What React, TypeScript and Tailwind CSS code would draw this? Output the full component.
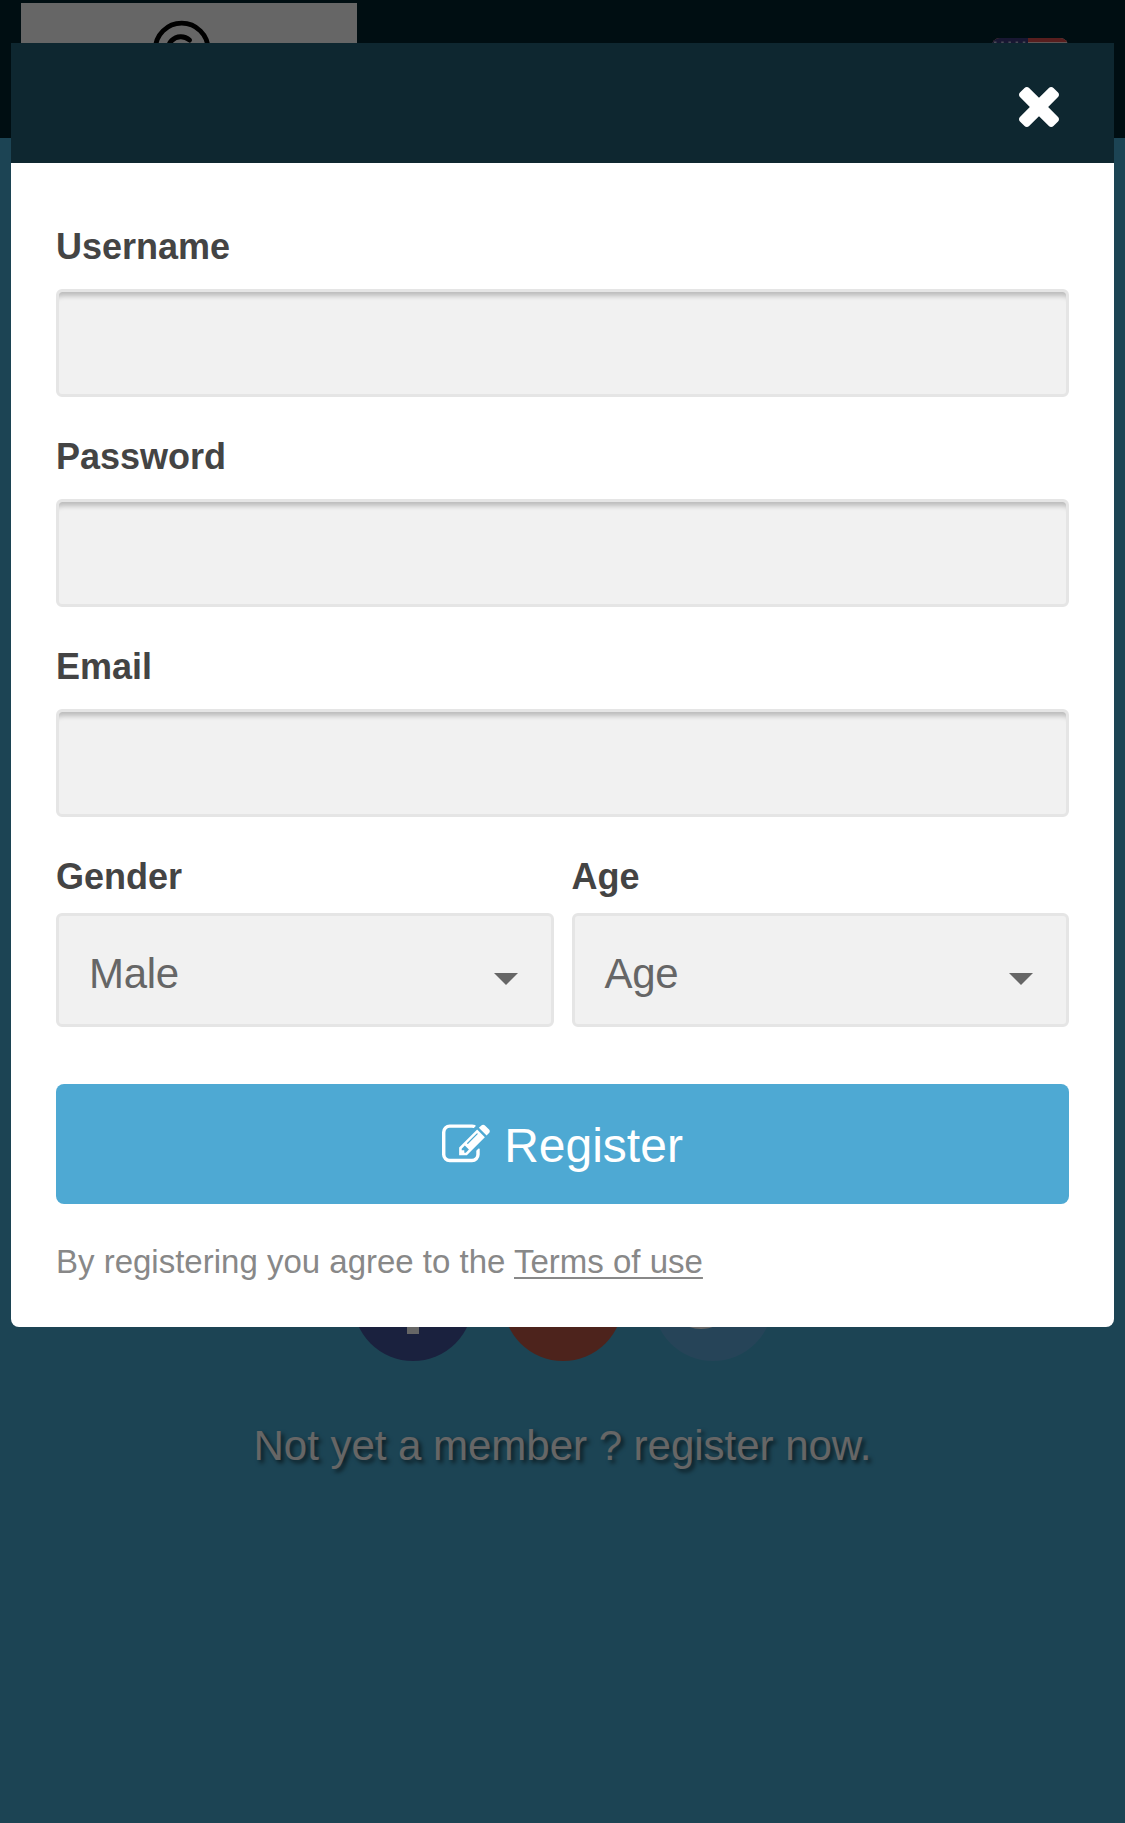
import React, { useState } from 'react';

interface TextFieldProps {
  label: string;
  type: string;
  value: string;
  onChange: (value: string) => void;
}

const TextField: React.FC<TextFieldProps> = ({ label, type, value, onChange }) => (
  <label className="block h-[210px]">
    <span className="block h-[70px] pt-1.5 text-[36px] font-bold leading-[44px] text-[#444]">{label}</span>
    <input
      type={type}
      value={value}
      onChange={(e) => onChange(e.target.value)}
      className="block h-[108px] w-full rounded-md border-[3px] border-[#e5e5e5] bg-[#f1f1f1] px-8 text-[42px] text-[#666] shadow-[inset_0_9px_5px_-5px_rgba(0,0,0,0.22)] outline-none"
    />
  </label>
);

interface SelectFieldProps {
  label: string;
  value: string;
}

const SelectField: React.FC<SelectFieldProps> = ({ label, value }) => (
  <div className="flex-1">
    <span className="block h-[64px] pt-1.5 text-[36px] font-bold leading-[44px] text-[#444]">{label}</span>
    <button
      type="button"
      className="flex h-[114px] w-full items-center justify-between rounded-md border-[3px] border-[#e5e5e5] bg-[#f1f1f1] pl-[30px] pr-[33px] text-[42px] text-[#666]"
    >
      <span className="pt-1.5 tracking-[-0.3px]">{value}</span>
      <svg className="mt-[17px] h-3 w-6" viewBox="0 0 24 12" fill="currentColor">
        <path d="M0 0h24L12 12z" />
      </svg>
    </button>
  </div>
);

const CloseIcon = () => (
  <svg className="h-10 w-10" viewBox="302 366 1188 1188" fill="currentColor">
    <path d="M1490 1322q0 40-28 68l-136 136q-28 28-68 28t-68-28l-294-294-294 294q-28 28-68 28t-68-28l-136-136q-28-28-28-68t28-68l294-294-294-294q-28-28-28-68t28-68l136-136q28-28 68-28t68 28l294 294 294-294q28-28 68-28t68 28l136 136q28 28 28 68t-28 68l-294 294 294 294q28 28 28 68z" />
  </svg>
);

const EditIcon = () => (
  <svg className="mt-0.5 h-12 w-12" viewBox="0 0 1792 1792" fill="currentColor">
    <path d="M888 1184l116-116-152-152-116 116v56h96v96h56zm440-720q-16-16-33 1l-350 350q-17 17-1 33t33-1l350-350q17-17 1-33zm80 594v190q0 119-84.500 203.500t-203.500 84.500h-832q-119 0-203.500-84.500t-84.500-203.500v-832q0-119 84.500-203.500t203.500-84.500h832q63 0 117 25 15 7 18 23 3 17-9 29l-49 49q-14 14-32 8-23-6-45-6h-832q-66 0-113 47t-47 113v832q0 66 47 113t113 47h832q66 0 113-47t47-113v-126q0-13 9-22l64-64q15-15 35-7t20 29zm-96-738l288 288-672 672h-288v-288zm444 132l-92 92-288-288 92-92q28-28 68-28t68 28l152 152q28 28 28 68t-28 68z" />
  </svg>
);

const FlagIcon = () => (
  <svg className="h-[54px] w-[76px]" viewBox="0 0 76 54">
    <clipPath id="flag">
      <rect width="76" height="54" rx="8" />
    </clipPath>
    <g clipPath="url(#flag)">
      <path fill="#fff" d="M0 0h76v54H0z" />
      <path stroke="#dc4b4b" strokeWidth="4.150" d="M0 2.080h76M0 10.380h76M0 18.690h76M0 27h76M0 35.310h76M0 43.620h76M0 51.920h76" />
      <path fill="#3d3b7d" d="M0 0h36v29H0z" />
      <path stroke="#b8b8d8" strokeWidth="2" strokeDasharray="2.500 4.700" d="M2 4.500h33" />
    </g>
  </svg>
);

const Landing = () => (
  <div className="flex h-full flex-col bg-[#46aad2]">
    <header className="flex h-[138px] shrink-0 items-start justify-between bg-[#02232d] pl-[21px] pr-[57px]">
      <div className="mt-[3px] h-[132px] w-[336px] bg-white">
        <svg className="h-full w-full" viewBox="0 0 336 132" fill="none" stroke="#000" strokeLinecap="round">
          <circle cx="160.700" cy="46.500" r="26.400" strokeWidth="4.800" />
          <path strokeWidth="5" d="M168.500 37a12.800 12.800 0 1 0 0 19" />
        </svg>
      </div>
      <div className="mt-[38px]">
        <FlagIcon />
      </div>
    </header>
    <div className="mt-[1103px] flex justify-center gap-[30px]">
      <div className="h-[120px] w-[120px] rounded-full bg-[#43539b]">
        <svg viewBox="0 0 120 120">
          <path fill="#fff" d="M54 93V65H44V53h10V43c0-11 6-17 16-17h8v12h-6c-4 0-6 2-6 6v9h12l-2 12H66v28z" />
        </svg>
      </div>
      <div className="h-[120px] w-[120px] rounded-full bg-[#c15846]" />
      <div className="h-[120px] w-[120px] rounded-full bg-[#5fabdc]">
        <svg viewBox="0 0 120 120">
          <path fill="#fff" d="M26 81c9 1 16-1 22-6-7 0-11-4-13-9h6c-7-2-11-7-11-13l6 1c-6-4-8-11-4-18 7 8 16 13 27 14-2-17 15-22 24-13l9-3-6 7 8-2-7 7c0 26-19 42-39 42-8 0-16-3-21-7z" />
        </svg>
      </div>
    </div>
    <p className="mt-[61px] text-center text-[42px] leading-[48px] tracking-[-0.02px] text-white [text-shadow:3px_3px_4px_rgba(0,0,0,0.6)]">
      Not yet a member ? register now.
    </p>
  </div>
);

const App: React.FC = () => {
  const [username, setUsername] = useState('');
  const [password, setPassword] = useState('');
  const [email, setEmail] = useState('');

  return (
    <div className="relative h-[1823px] w-[1125px] overflow-hidden font-['Helvetica','Liberation_Sans',sans-serif]">
      <Landing />

      {/* Registration modal */}
      <div className="absolute inset-0 bg-black/60 px-[11px] pt-[43px]">
        <div className="h-[1284px] overflow-hidden rounded-b-lg bg-white">
          <div className="flex h-[120px] items-center justify-end bg-[#0e2730] pr-[55px] pt-2 text-white">
            <button type="button" aria-label="Close">
              <CloseIcon />
            </button>
          </div>

          <form className="px-[45px] pt-[56px]" onSubmit={(e) => e.preventDefault()}>
            <TextField label="Username" type="text" value={username} onChange={setUsername} />
            <TextField label="Password" type="password" value={password} onChange={setPassword} />
            <TextField label="Email" type="email" value={email} onChange={setEmail} />

            <div className="flex gap-[18px]">
              <SelectField label="Gender" value="Male" />
              <SelectField label="Age" value="Age" />
            </div>

            <button
              type="submit"
              className="mt-[57px] flex h-[120px] w-full items-center justify-center gap-[14px] rounded-lg bg-[#4ea9d3] text-[48px] text-white"
            >
              <EditIcon />
              <span className="pt-1">Register</span>
            </button>

            <p className="mt-[39px] text-[33px] leading-[38px] text-[#888]">
              By registering you agree to the{' '}
              <a href="#terms" className="underline decoration-2 underline-offset-[4px]">
                Terms of use
              </a>
            </p>
          </form>
        </div>
      </div>
    </div>
  );
};

export default App;
